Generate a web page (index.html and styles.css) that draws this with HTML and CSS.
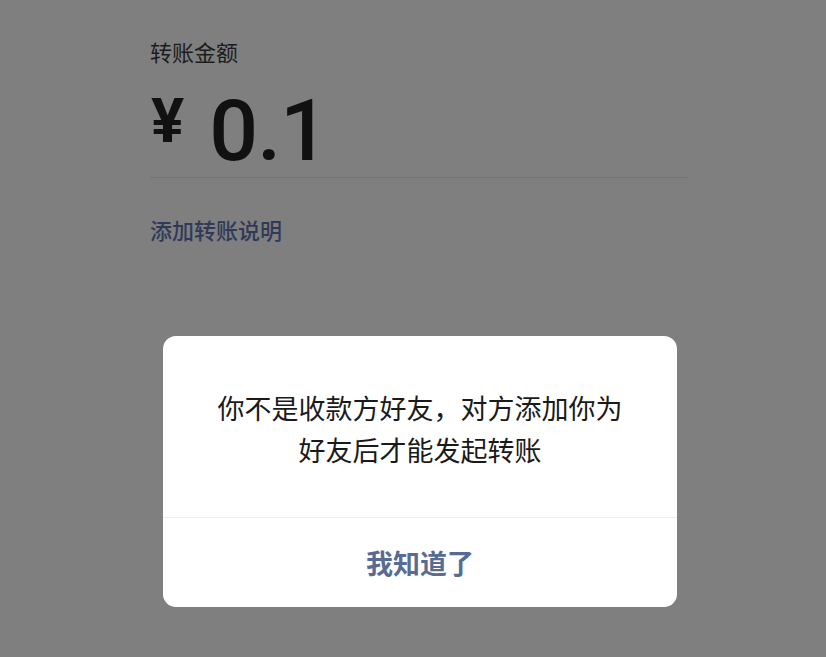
FILE: index.html
```html
<!DOCTYPE html>
<html lang="zh-CN">
<head>
<meta charset="utf-8">
<link rel="stylesheet" href="styles.css">
</head>
<body>
<div class="page">
  <div class="label">转账金额</div>
  <div class="amount"><span class="yen">¥</span><span class="num">0.1</span></div>
  <div class="note">添加转账说明</div>
</div>
<div class="mask">
  <div class="dialog">
    <div class="dialog-body">你不是收款方好友，对方添加你为<br>好友后才能发起转账</div>
    <div class="dialog-btn">我知道了</div>
  </div>
</div>
</body>
</html>
```
FILE: styles.css
```css
html, body {
  margin: 0;
  padding: 0;
  width: 826px;
  height: 657px;
  overflow: hidden;
  background: #7f7f7f;
  font-family: "Noto Sans CJK SC", "Noto Sans", sans-serif;
}
.page {
  margin-left: 150px;
  width: 538px;
  padding-top: 36px;
}
.label {
  font-size: 22px;
  line-height: 30px;
  color: #1c1c1c;
}
.amount {
  display: flex;
  align-items: flex-start;
  height: 112px;
  padding-top: 15px;
  border-bottom: 1px solid #747474;
  font-family: Roboto, "Liberation Sans", sans-serif;
  color: #111111;
  box-sizing: border-box;
}
.yen {
  font-size: 62px;
  font-weight: 700;
  line-height: 80px;
  margin-right: 25px;
  margin-left: 1px;
}
.num {
  font-size: 86px;
  font-weight: 500;
  line-height: 100px;
  letter-spacing: -1px;
}
.note {
  margin-top: 36px;
  font-size: 22px;
  font-weight: 500;
  line-height: 30px;
  color: #2f3a58;
}
.mask {
  position: absolute;
  inset: 0;
}
.dialog {
  position: absolute;
  left: 163px;
  top: 336px;
  width: 514px;
  height: 271px;
  background: #ffffff;
  border-radius: 13px;
  display: flex;
  flex-direction: column;
  overflow: hidden;
}
.dialog-body {
  height: 182px;
  box-sizing: border-box;
  padding-top: 51px;
  text-align: center;
  font-size: 27px;
  line-height: 42px;
  color: #1a1a1a;
  border-bottom: 1px solid #ececec;
}
.dialog-btn {
  flex: 1;
  display: flex;
  align-items: center;
  justify-content: center;
  font-size: 27px;
  font-weight: 600;
  color: #576b95;
}
```
